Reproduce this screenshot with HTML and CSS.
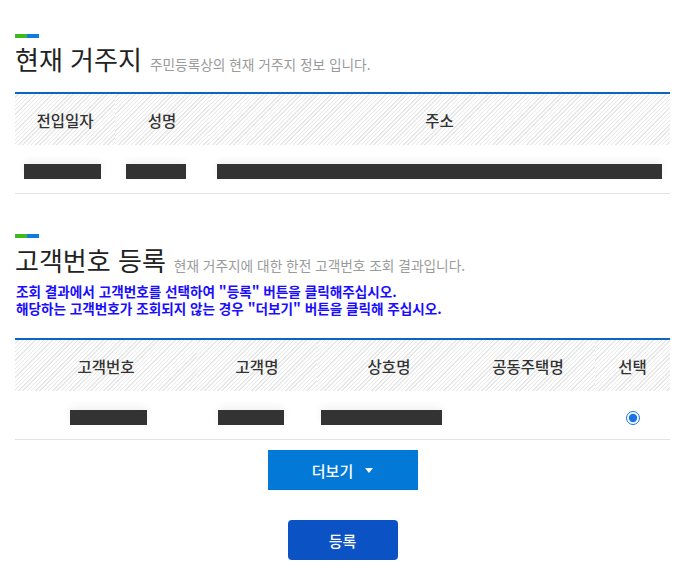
FILE: index.html
```html
<!DOCTYPE html>
<html lang="ko">
<head>
<meta charset="utf-8">
<link rel="stylesheet" href="styles.css">
</head>
<body>
<div class="page">
  <section class="section first">
    <div class="accent"></div>
    <div class="title-row">
      <h2 class="title">현재 거주지</h2>
      <span class="sub">주민등록상의 현재 거주지 정보 입니다.</span>
    </div>
    <table class="tbl tbl1">
      <colgroup><col class="c1"><col class="c2"><col></colgroup>
      <thead>
        <tr><th>전입일자</th><th>성명</th><th>주소</th></tr>
      </thead>
      <tbody>
        <tr>
          <td><span class="bar b1"></span></td>
          <td><span class="bar b2"></span></td>
          <td><span class="bar b3"></span></td>
        </tr>
      </tbody>
    </table>
  </section>

  <section class="section second">
    <div class="accent"></div>
    <div class="title-row">
      <h2 class="title">고객번호 등록</h2>
      <span class="sub">현재 거주지에 대한 한전 고객번호 조회 결과입니다.</span>
    </div>
    <p class="notice">조회 결과에서 고객번호를 선택하여 "등록" 버튼을 클릭해주십시오.<br>해당하는 고객번호가 조회되지 않는 경우 "더보기" 버튼을 클릭해 주십시오.</p>
    <table class="tbl tbl2">
      <colgroup><col class="d1"><col class="d2"><col class="d3"><col class="d4"><col class="d5"></colgroup>
      <thead>
        <tr><th>고객번호</th><th>고객명</th><th>상호명</th><th>공동주택명</th><th>선택</th></tr>
      </thead>
      <tbody>
        <tr>
          <td><span class="bar e1"></span></td>
          <td><span class="bar e2"></span></td>
          <td><span class="bar e3"></span></td>
          <td></td>
          <td><input class="radio" type="radio" name="sel" checked></td>
        </tr>
      </tbody>
    </table>
    <div class="actions">
      <button class="btn more" type="button">더보기<svg class="caret" width="8" height="5" viewBox="0 0 8 5"><path d="M0 0H8L4 5Z" fill="#fff"/></svg></button>
      <button class="btn submit" type="button">등록</button>
    </div>
  </section>
</div>
</body>
</html>
```

FILE: styles.css
```css
html, body {
  margin: 0;
  padding: 0;
  background: #fff;
}
body {
  font-family: "Noto Sans CJK KR", "Noto Sans", sans-serif;
  color: #333;
}
.page {
  width: 655px;
  padding: 0 16px 0 15px;
}
.section.first {
  padding-top: 34px;
}
.section.second {
  padding-top: 40px;
}
.accent {
  width: 24px;
  height: 4px;
  background: linear-gradient(90deg, #3fba1e 0 50%, #0b7de0 50% 100%);
}
.title-row {
  display: flex;
  align-items: baseline;
  margin-top: 5px;
  height: 32px;
}
.second .title-row {
  margin-top: 6px;
}
.title {
  margin: 0;
  font-size: 26px;
  line-height: 32px;
  font-weight: 400;
  color: #222;
}
.sub {
  margin-left: 8px;
  font-size: 13.7px;
  color: #9a9a9a;
}
.notice {
  margin: 7px 0 0 1px;
  font-size: 13.6px;
  line-height: 17px;
  font-weight: 700;
  color: #1a0dff;
}
.tbl {
  width: 655px;
  border-collapse: collapse;
  table-layout: fixed;
  border-top: 2px solid #0a66c2;
}
.tbl1 {
  margin-top: 17px;
}
.tbl2 {
  margin-top: 21px;
}
.tbl th {
  height: 51px;
  padding: 0;
  font-size: 15.5px;
  font-weight: 500;
  color: #333;
  background: repeating-linear-gradient(135deg, #fdfdfd 0 2px, #e8e8e8 2px 3px);
}
.tbl td {
  height: 48px;
  padding: 0;
  text-align: center;
  border-bottom: 1px solid #e3e3e3;
}
.c1 { width: 100px; }
.c2 { width: 94px; }
.d1 { width: 182px; }
.d2 { width: 120px; }
.d3 { width: 144px; }
.d4 { width: 134px; }
.d5 { width: 75px; }
.bar {
  display: inline-block;
  height: 15px;
  vertical-align: middle;
  background: #333;
  box-shadow: 0 -3px 8px rgba(0, 0, 0, 0.06);
}
.b1 { width: 77px; margin-right: 5px; }
.b2 { width: 60px; margin-right: 12px; }
.b3 { width: 445px; }
.e1 { width: 77px; margin-left: 5px; }
.e2 { width: 66px; margin-right: 12px; }
.e3 { width: 121px; margin-right: 16px; }
.radio {
  margin: 0;
  width: 14px;
  height: 14px;
  vertical-align: middle;
  accent-color: #1a73e8;
}
.actions {
  display: flex;
  flex-direction: column;
  align-items: center;
  gap: 30px;
  margin-top: 10px;
}
.btn {
  height: 40px;
  border: 0;
  padding: 0;
  font-family: "Noto Sans CJK KR", "Noto Sans", sans-serif;
  font-size: 15px;
  font-weight: 500;
  color: #fff;
  display: flex;
  align-items: center;
  justify-content: center;
}
.more {
  width: 150px;
  background: #0279d6;
}
.caret {
  margin-left: 12px;
}
.submit {
  width: 110px;
  background: #0b52c4;
  border-radius: 4px;
}
```
